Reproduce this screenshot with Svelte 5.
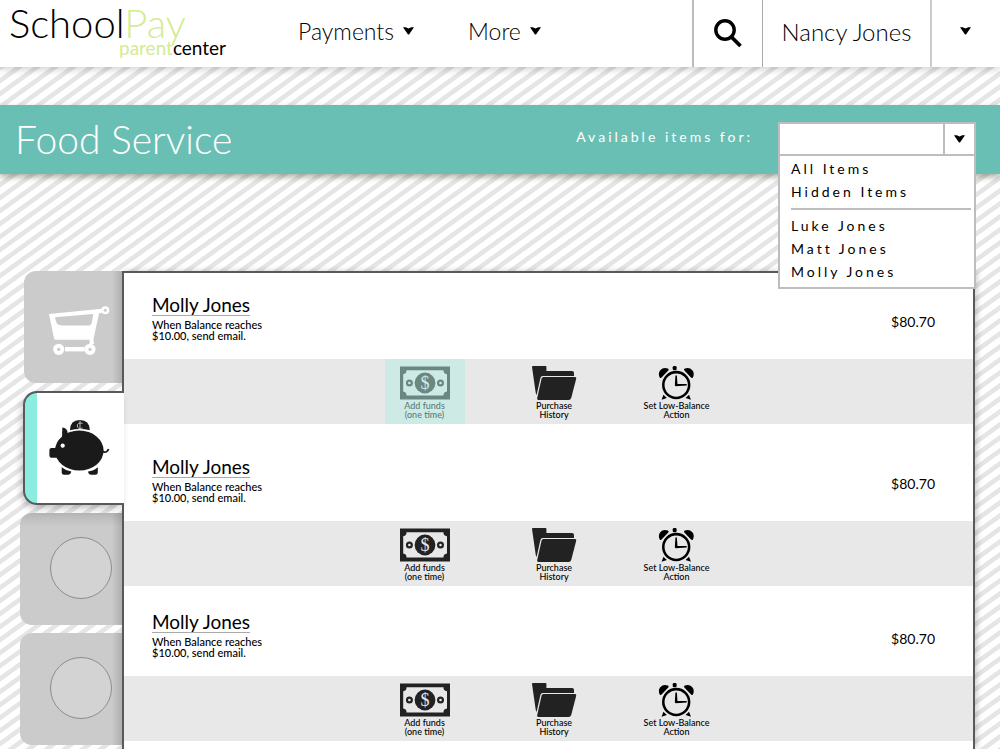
<script>
  const menuGroups = [
    ['All Items', 'Hidden Items'],
    ['Luke Jones', 'Matt Jones', 'Molly Jones'],
  ];

  const accounts = [
    { name: 'Molly Jones', balance: '$80.70', selected: true },
    { name: 'Molly Jones', balance: '$80.70', selected: false },
    { name: 'Molly Jones', balance: '$80.70', selected: false },
  ];

  let chosen = $state('');
</script>

{#snippet caret()}
  <svg class="caret" viewBox="0 0 11 8" width="11" height="8" aria-hidden="true">
    <path d="M0 0.3 H2.8 L5.5 1.6 L8.2 0.3 H11 L6.2 7.2 Q5.5 8 4.8 7.2 Z" />
  </svg>
{/snippet}

<div class="page">
  <header class="topbar">
    <a class="logo" href="#home">
      <span class="logo-main">School<span class="lime">Pay</span></span>
      <span class="logo-sub"><span class="lime">parent</span>center</span>
    </a>
    <nav class="nav">
      <button type="button">Payments {@render caret()}</button>
      <button type="button">More {@render caret()}</button>
    </nav>
    <div class="user">
      <button type="button" class="search" aria-label="Search">
        <svg viewBox="0 0 28 30" width="28" height="30" aria-hidden="true">
          <circle cx="11" cy="11" r="9.2" fill="none" stroke="#000" stroke-width="3.4" />
          <path d="M17.5 18 L26.5 27" stroke="#000" stroke-width="3.8" />
        </svg>
      </button>
      <button type="button" class="who">Nancy Jones</button>
      <button type="button" class="more" aria-label="Account menu">{@render caret()}</button>
    </div>
  </header>

  <section class="banner">
    <h1>Food Service</h1>
    <label for="items-for">Available items for:</label>
    <div class="picker">
      <div class="field">
        <select id="items-for" bind:value={chosen}>
          <option value=""></option>
          {#each menuGroups.flat() as item}
            <option value={item}>{item}</option>
          {/each}
        </select>
        <span class="arrow">{@render caret()}</span>
      </div>
      <div class="menu">
        {#each menuGroups as group}
          <ul>
            {#each group as item}
              <li><button type="button" onclick={() => (chosen = item)}>{item}</button></li>
            {/each}
          </ul>
        {/each}
      </div>
    </div>
  </section>

  <main class="content">
    <aside class="tabs">
      <button type="button" class="tab cart" aria-label="Store">
        <svg viewBox="0 0 62 50" width="62" height="50" aria-hidden="true">
          <path fill="#fff" fill-rule="evenodd" d="M1 8 L54 2.8 L54.5 6.5 L51 7.5 L45.5 33 L46 38 H41.4 L41.7 33.8 H7.5 Q6.3 33.8 6 32.5 Z M7 11.3 L45.3 8 L43.8 16.5 Q43.2 19.4 40.5 19.4 H14.5 Q9.5 19.4 8.4 16.5 Z" />
          <g fill="#fff">
            <circle cx="57.3" cy="4.3" r="4" />
            <circle cx="10.7" cy="43.3" r="5.6" />
            <circle cx="42" cy="43.3" r="5.6" />
            <rect x="17" y="41" width="19.7" height="4.4" />
          </g>
          <g fill="#cbcbcb">
            <circle cx="57.3" cy="4.3" r="1.5" />
            <circle cx="10.7" cy="43.3" r="1.6" />
            <circle cx="42" cy="43.3" r="1.6" />
          </g>
        </svg>
      </button>
      <button type="button" class="tab active" aria-label="Food service">
        <svg viewBox="0 0 62 58" width="62" height="58" aria-hidden="true">
          <g fill="#1a1a1a">
            <path d="M22 12.3 Q22 2 31.8 2 Q41.6 2 41.8 12.3 Q32 9.5 22 12.3 Z" />
            <ellipse cx="31.3" cy="32.6" rx="24.3" ry="20" />
            <path d="M14.3 9.5 Q19.5 10 19.8 15.5 L14 20.5 Z" />
            <rect x="1.4" y="30" width="9" height="9.7" rx="2" />
            <path d="M13.7 49.3 Q18 53 23.3 53.5 Q22.5 56.7 20 56.7 H16 Q13.7 56.7 13.7 54.5 Z" />
            <path d="M49.8 49.3 Q45.5 53 40 53.5 Q40.6 56.7 43.2 56.7 H47.4 Q49.8 56.7 49.8 54.5 Z" />
          </g>
          <path d="M54.5 33.6 Q59.5 35.2 60.5 31" fill="none" stroke="#1a1a1a" stroke-width="1.8" />
          <circle cx="14.7" cy="27.7" r="2.1" fill="#fff" />
          <path d="M34.6 5.4 Q29.3 4 29.3 8 Q29.5 11.4 34.6 10.1 M32 2.8 V11" fill="none" stroke="#ccc" stroke-width="0.9" />
        </svg>
      </button>
      <button type="button" class="tab shaded" aria-label="Tab 3"><span class="dot"></span></button>
      <button type="button" class="tab" aria-label="Tab 4"><span class="dot"></span></button>
    </aside>

    <section class="panel">
      {#each accounts as account}
        <article class="account">
          <div class="info">
            <div>
              <a class="name" href="#account">{account.name}</a>
              <p>When Balance reaches<br />$10.00, send email.</p>
            </div>
            <span class="balance">{account.balance}</span>
          </div>
          <div class="actions">
            <button type="button" class="funds" class:selected={account.selected}>
              <svg viewBox="0 0 50 34" width="50" height="34" aria-hidden="true">
                <rect y="0.5" width="50" height="33" fill="#222" />
                <path fill="#e8e8e8" d="M6.5 4.3 H43.5 Q43.2 7.8 47 8.3 V25.5 Q43.2 26 43.5 29.6 H6.5 Q6.8 26 3.2 25.5 V8.3 Q6.8 7.8 6.5 4.3 Z" />
                <circle cx="25" cy="17" r="10.4" fill="#222" />
                <circle cx="9.4" cy="17" r="2.4" fill="none" stroke="#222" stroke-width="2.2" />
                <circle cx="40.5" cy="17" r="2.4" fill="none" stroke="#222" stroke-width="2.2" />
                <text x="25" y="23" text-anchor="middle" font-family="Liberation Serif, serif" font-size="18" fill="#e8e8e8">$</text>
              </svg>
              <span>Add funds<br />(one time)</span>
            </button>
            <button type="button">
              <svg viewBox="0 0 45 34" width="45" height="34" aria-hidden="true">
                <path fill="#222" d="M0.8 0 H13.6 Q14.4 0 14.4 0.8 V5 H40 Q42 5 42 7 V10 H10.6 Q9 10 8.4 12 L4.6 29 Q3.8 28 3.6 26 L0 1 Q0 0 0.8 0 Z" />
                <path fill="#222" d="M11.4 11 H43 Q44.6 11 44.2 12.8 L39.2 32 Q38.6 34 36.6 34 H6.4 Q4.8 34 5.2 32 L9.6 12.6 Q10 11 11.4 11 Z" />
              </svg>
              <span>Purchase<br />History</span>
            </button>
            <button type="button">
              <svg viewBox="0 0 37 35" width="37" height="34" aria-hidden="true">
                <circle cx="18.2" cy="19.6" r="13.3" fill="none" stroke="#000" stroke-width="2.6" />
                <path d="M17.4 9.8 H18.9 L19.5 18.6 H29 V20 L17.6 20.8 Q16.6 20.3 16.8 19 Z" />
                <path d="M1.2 11.8 Q-0.8 7.5 1.8 4.3 Q5 0.8 9.6 2.7 Q11 3.6 10 4.6 L3.4 11.6 Q2.2 13 1.2 11.8 Z" />
                <path d="M35.4 11.8 Q37.4 7.5 34.8 4.3 Q31.6 0.8 27 2.7 Q25.6 3.6 26.6 4.6 L33.2 11.6 Q34.4 13 35.4 11.8 Z" />
                <rect x="14.6" y="0" width="4" height="4.4" rx="1.4" />
                <path d="M5 29.6 L8.6 33 L3.2 34.8 Z M31.4 29.6 L27.8 33 L33.4 34.8 Z" />
              </svg>
              <span>Set Low-Balance<br />Action</span>
            </button>
          </div>
        </article>
      {/each}
    </section>
  </main>
</div>

<style>
  :global(body) {
    margin: 0;
  }

  .page {
    box-sizing: border-box;
    min-height: 100vh;
    display: flex;
    flex-direction: column;
    font-family: 'Century Gothic', Lato, sans-serif;
    color: #000;
    background-color: #fff;
    background-image: linear-gradient(
      to bottom right,
      #e5e5e5 0 20%,
      #fff 24% 48%,
      #e5e5e5 52% 70%,
      #fff 74% 98%,
      #e5e5e5 100%
    );
    background-size: 18px 13px;
    overflow: hidden;
  }

  button {
    font: inherit;
    color: inherit;
    background: none;
    border: 0;
    padding: 0;
    cursor: pointer;
  }

  svg {
    display: block;
  }

  .topbar {
    display: flex;
    height: 67px;
    background: #fff;
    box-shadow: 0 2px 8px rgba(0, 0, 0, 0.2);
    font-weight: 300;
  }

  .logo {
    width: 217px;
    margin: 0 72px 0 9px;
    padding-top: 3px;
    display: flex;
    flex-direction: column;
    color: #000;
    text-decoration: none;
  }

  .logo-main {
    font-size: 40px;
    line-height: 40px;
  }

  .logo-sub {
    align-self: flex-end;
    margin-top: -5px;
    font-size: 19px;
    line-height: 20px;
    font-weight: 400;
  }

  .lime {
    color: #d2ec92;
  }

  .nav {
    flex: 1;
    display: flex;
    gap: 54px;
    padding-bottom: 5px;
    font-size: 23px;
  }

  .nav button {
    display: flex;
    align-items: center;
    gap: 9px;
  }

  .user {
    display: flex;
    font-size: 24px;
  }

  .user button {
    display: flex;
    align-items: center;
    justify-content: center;
    padding-bottom: 5px;
  }

  .user .search {
    width: 70px;
    border-left: 2px solid #bbb;
    padding-bottom: 0;
  }

  .user .who {
    width: 168px;
    border-left: 1px solid #aaa;
  }

  .user .more {
    width: 70px;
    padding-right: 2px;
    border-left: 2px solid #ccc;
  }

  .banner {
    position: relative;
    z-index: 5;
    display: flex;
    height: 69px;
    margin-top: 38px;
    padding: 0 24px 0 15px;
    background: #6abfb5;
    color: #fff;
    box-shadow: 0 3px 6px rgba(60, 50, 30, 0.4);
  }

  h1 {
    flex: 1;
    margin: 0;
    font-size: 39px;
    line-height: 68px;
    font-weight: 300;
  }

  label {
    margin-right: 25px;
    font-size: 14px;
    line-height: 64px;
    letter-spacing: 3px;
  }

  .picker {
    position: relative;
    align-self: flex-start;
    width: 198px;
    margin-top: 17px;
    color: #000;
  }

  .field {
    display: grid;
    grid-template-columns: 1fr 31px;
    height: 30px;
    border: 2px solid #bdbdbd;
    background: #fff;
  }

  select {
    grid-area: 1 / 1 / 2 / 3;
    appearance: none;
    min-width: 0;
    padding: 0 40px 0 10px;
    border: 0;
    background: none;
    font: inherit;
    font-size: 14px;
    color: inherit;
  }

  .arrow {
    grid-area: 1 / 2;
    display: flex;
    align-items: center;
    justify-content: center;
    border-left: 2px solid #bdbdbd;
    pointer-events: none;
  }

  .menu {
    position: absolute;
    top: 32px;
    left: 0;
    right: 0;
    padding: 1px 3px 4px 11px;
    border: 2px solid #bdbdbd;
    background: #fff;
  }

  .menu ul {
    list-style: none;
    margin: 0;
    padding: 0;
  }

  .menu ul + ul {
    margin-top: 5px;
    padding-top: 4px;
    border-top: 2px solid #bdbdbd;
  }

  .menu button {
    display: block;
    width: 100%;
    text-align: left;
    font-size: 14px;
    line-height: 23px;
    letter-spacing: 3px;
  }

  .content {
    flex: 1;
    display: flex;
    margin-top: 97px;
    padding-right: 25px;
  }

  .tabs {
    width: 122px;
    display: flex;
    flex-direction: column;
    align-items: flex-end;
    gap: 8px;
  }

  .tab {
    position: relative;
    box-sizing: border-box;
    display: flex;
    align-items: center;
    justify-content: flex-end;
    width: 102px;
    height: 112px;
    padding: 0 10px 3px 0;
    border-radius: 12px 0 0 12px;
    background: linear-gradient(to right, transparent 90%, rgba(0, 0, 0, 0.14)) #cbcbcb;
  }

  .cart {
    width: 98px;
    padding: 8px 12px 0 0;
  }

  .shaded {
    background:
      linear-gradient(to bottom, rgba(0, 0, 0, 0.1), transparent 12%),
      linear-gradient(to right, transparent 90%, rgba(0, 0, 0, 0.14)) #cbcbcb;
  }

  .active {
    z-index: 2;
    width: 101px;
    height: 114px;
    margin-right: -2px;
    padding: 0 14px 2px 0;
    border: 2px solid #58595b;
    border-right: 0;
    border-radius: 14px 0 0 14px;
    background: linear-gradient(to right, #8dece0 12px, #fff 12px);
    box-shadow: -2px 4px 8px -2px rgba(0, 0, 0, 0.3);
  }

  .dot {
    box-sizing: border-box;
    width: 62px;
    height: 62px;
    border: 1px solid #8c8c8c;
    border-radius: 50%;
    background: #d3d3d3;
  }

  .panel {
    flex: 1;
    border: 2px solid #58595b;
    border-bottom: 0;
    background: #fff;
    box-shadow: 2px 0 6px rgba(0, 0, 0, 0.2);
  }

  .info {
    display: flex;
    align-items: flex-start;
    justify-content: space-between;
    padding: 20px 38px 18px 28px;
  }

  .account:nth-child(2) .info {
    padding-top: 31px;
  }

  .account:nth-child(3) .info {
    padding-top: 24px;
  }

  .name {
    display: block;
    font-size: 19px;
    line-height: 24px;
    color: #000;
    text-decoration: underline 1px #aaa;
    text-underline-offset: 3px;
    text-decoration-skip-ink: none;
  }

  .info p {
    margin: 2px 0 0;
    font-size: 11px;
    line-height: 11px;
    font-weight: 500;
  }

  .balance {
    margin-top: 21px;
    font-size: 14px;
    line-height: 16px;
  }

  .actions {
    display: flex;
    justify-content: center;
    gap: 67px;
    height: 65px;
    padding-right: 3px;
    background: #e8e8e8;
  }

  .actions button {
    display: flex;
    flex-direction: column;
    align-items: center;
    gap: 1px;
    padding-top: 7px;
    font-size: 9px;
    line-height: 9px;
    font-weight: 500;
  }

  .actions .funds {
    width: 80px;
  }

  .selected {
    position: relative;
  }

  .selected::after {
    content: '';
    position: absolute;
    inset: 0;
    background: rgba(180, 235, 225, 0.5);
  }
</style>
